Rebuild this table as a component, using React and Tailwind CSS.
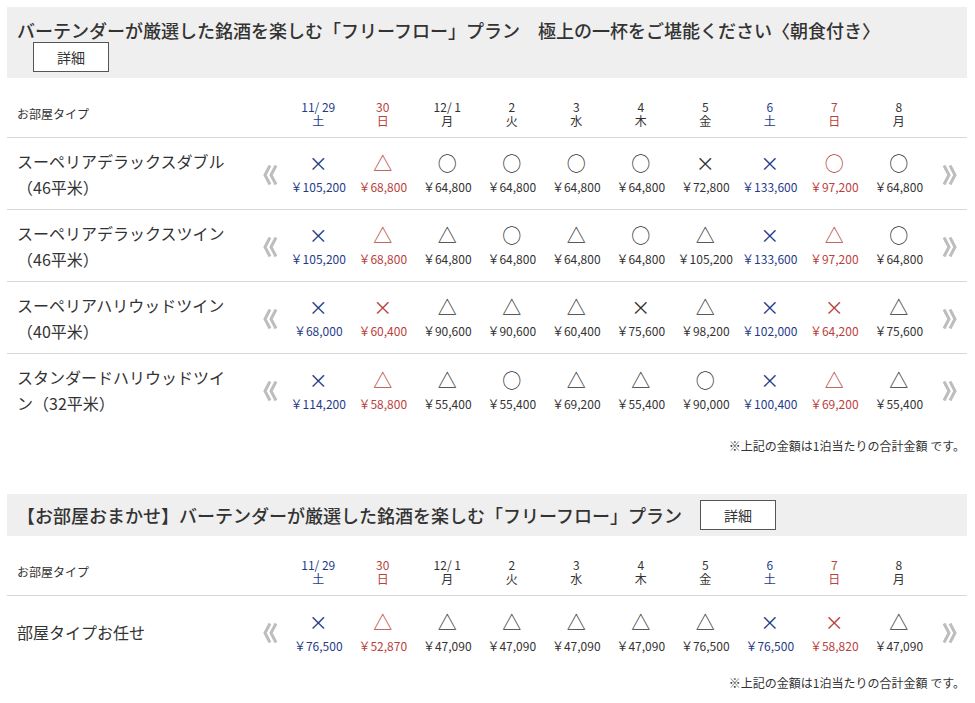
import React from "react";

const BLUE = "text-[#1f3c88]";
const RED = "text-[#b8423c]";
const DARK = "text-[#333]";

const days = [
    { d: "11/ 29", w: "土", c: BLUE },
    { d: "30", w: "日", c: RED },
    { d: "12/ 1", w: "月", c: DARK },
    { d: "2", w: "火", c: DARK },
    { d: "3", w: "水", c: DARK },
    { d: "4", w: "木", c: DARK },
    { d: "5", w: "金", c: DARK },
    { d: "6", w: "土", c: BLUE },
    { d: "7", w: "日", c: RED },
    { d: "8", w: "月", c: DARK },
];

const plan1 = [
    { name: ["スーペリアデラックスダブル", "（46平米）"], marks: "×△○○○○××○○", prices: ["105,200", "68,800", "64,800", "64,800", "64,800", "64,800", "72,800", "133,600", "97,200", "64,800"] },
    { name: ["スーペリアデラックスツイン", "（46平米）"], marks: "×△△○△○△×△○", prices: ["105,200", "68,800", "64,800", "64,800", "64,800", "64,800", "105,200", "133,600", "97,200", "64,800"] },
    { name: ["スーペリアハリウッドツイン", "（40平米）"], marks: "××△△△×△××△", prices: ["68,000", "60,400", "90,600", "90,600", "60,400", "75,600", "98,200", "102,000", "64,200", "75,600"] },
    { name: ["スタンダードハリウッドツイ", "ン（32平米）"], marks: "×△△○△△○×△△", prices: ["114,200", "58,800", "55,400", "55,400", "69,200", "55,400", "90,000", "100,400", "69,200", "55,400"] },
];

const plan2 = [
    { name: ["部屋タイプお任せ"], marks: "×△△△△△△××△", prices: ["76,500", "52,870", "47,090", "47,090", "47,090", "47,090", "76,500", "76,500", "58,820", "47,090"] },
];

const grid = "grid grid-cols-[248px_31px_repeat(10,64.5px)_36px]";

const Arrow = ({ right }) => (
    <svg width="15" height="22" viewBox="0 0 15 22" className={right ? "" : "-scale-x-100"}>
        <path d="M2 1.5 L7 11 L2 20.5" fill="none" stroke="#bdbdbd" strokeWidth="3" />
        <path d="M8 1.5 L13 11 L8 20.5" fill="none" stroke="#bdbdbd" strokeWidth="3" />
    </svg>
);

const DetailButton = ({ className }) => (
    <button className={"block h-[30px] w-[76px] bg-white border border-[#555] text-[14px] text-[#333] " + className}>詳細</button>
);

const HeaderRow = () => (
    <div className={grid + " pt-[22px] pb-[9px] border-b border-[#d8d8d8] items-center"}>
        <div className="pl-[10px] text-[12px] text-[#333]">お部屋タイプ</div>
        <div></div>
        {days.map((x, i) => (
            <div key={i} className={"flex flex-col items-center text-[12px] leading-[14px] " + x.c}>
                <span>{x.d}</span>
                <span>{x.w}</span>
            </div>
        ))}
        <div></div>
    </div>
);

const RoomRow = ({ room, last }) => (
    <div className={grid + " h-[72px] items-center " + (last ? "" : "border-b border-[#d8d8d8]")}>
        <div className="pl-[10px] text-[16px] leading-[26px] text-[#333]">
            {room.name.map((n, i) => (
                <div key={i}>{n}</div>
            ))}
        </div>
        <div className="flex justify-center pt-[2px]"><Arrow /></div>
        {room.marks.split("").map((m, i) => (
            <div key={i} className={"flex flex-col items-center " + days[i].c}>
                <span className="text-[19px] leading-[24px]">{m}</span>
                <span className="text-[12px] leading-[18px] mt-[3px] whitespace-nowrap">￥{room.prices[i]}</span>
            </div>
        ))}
        <div className="flex justify-center pt-[2px]"><Arrow right /></div>
    </div>
);

const Note = ({ className }) => (
    <div className={"text-right pr-[2px] text-[12px] leading-[14px] text-[#333] " + className}>※上記の金額は1泊当たりの合計金額 です。</div>
);

const App = () => {
    return (
        <div className="bg-white min-h-screen px-[7px] pt-[7px] text-[#333]" style={{ fontFamily: '"Noto Sans CJK JP", "Noto Sans", sans-serif' }}>
            <div className="w-[960px]">
                <div className="bg-[#efefef] pl-[10px] pt-[11px] pb-[6px]">
                    <div className="text-[18px] leading-[24px] font-medium text-[#333] whitespace-nowrap">
                        バーテンダーが厳選した銘酒を楽しむ「フリーフロー」プラン　極上の一杯をご堪能ください〈朝食付き〉
                    </div>
                    <DetailButton className="mt-[0px] ml-[16px]" />
                </div>
                <HeaderRow />
                {plan1.map((r, i) => (
                    <RoomRow key={i} room={r} last={i === plan1.length - 1} />
                ))}
                <Note className="mt-[13px]" />

                <div className="mt-[41px] bg-[#efefef] pl-[10px] h-[42px] flex items-center gap-[18px]">
                    <div className="text-[18px] leading-[22px] font-medium text-[#333] whitespace-nowrap">
                        【お部屋おまかせ】バーテンダーが厳選した銘酒を楽しむ「フリーフロー」プラン
                    </div>
                    <DetailButton className="h-[29px]" />
                </div>
                <HeaderRow />
                {plan2.map((r, i) => (
                    <RoomRow key={i} room={r} last />
                ))}
                <Note className="mt-[8px]" />
            </div>
        </div>
    );
};

export default App;
